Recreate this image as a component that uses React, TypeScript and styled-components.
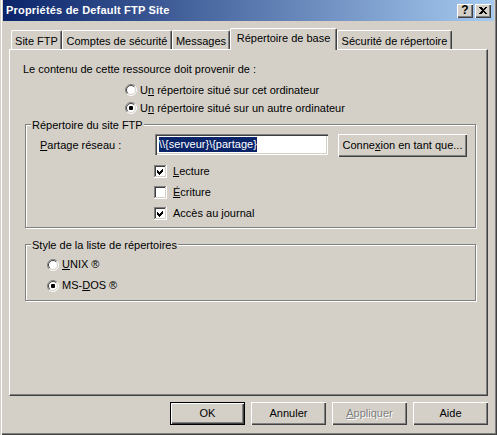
import React from 'react'
import styled, { createGlobalStyle } from 'styled-components'

const face = '#d4d0c8'
const shadow = '#808080'
const darkShadow = '#404040'

const GlobalStyle = createGlobalStyle`
  html, body {
    margin: 0;
    padding: 0;
    background: ${face};
  }
  body {
    font-family: 'Liberation Sans', Arial, sans-serif;
    font-size: 11px;
    line-height: 13px;
    color: #000;
  }
`

const raised = `inset 1px 1px #fff, inset -1px -1px ${darkShadow}, inset -2px -2px ${shadow}`

const Window = styled.div`
  width: 497px;
  height: 435px;
  box-sizing: border-box;
  display: flex;
  flex-direction: column;
  padding: 0 3px 3px 3px;
  background: ${face};
  box-shadow: inset 1px 0 ${face}, inset 2px 0 #fff, inset -1px -1px ${darkShadow}, inset -2px -2px ${shadow};
`

const TitleBar = styled.div`
  height: 21px;
  flex: none;
  display: flex;
  align-items: center;
  gap: 2px;
  padding: 0 3px;
  background: linear-gradient(to right, #0a246a, #a6caf0);
  color: #fff;
  font-weight: bold;
`

const TitleText = styled.div`
  flex: 1;
  white-space: nowrap;
  letter-spacing: 0.2px;
`

const CaptionButton = styled.div`
  width: 16px;
  height: 14px;
  box-sizing: border-box;
  display: flex;
  align-items: center;
  justify-content: center;
  background: ${face};
  color: #000;
  font-weight: bold;
  font-size: 12px;
  box-shadow: ${raised};
`

const Body = styled.div`
  flex: 1;
  display: flex;
  flex-direction: column;
  padding: 7px 6px 0 6px;
`

const TabStrip = styled.div`
  height: 21px;
  display: flex;
  align-items: flex-end;
  padding-left: 2px;
`

const Tab = styled.div<{ $width: number; $active?: boolean }>`
  width: ${(p) => p.$width}px;
  height: ${(p) => (p.$active ? 22 : 19)}px;
  margin-bottom: ${(p) => (p.$active ? -1 : 0)}px;
  padding-top: ${(p) => (p.$active ? 3 : 4)}px;
  box-sizing: border-box;
  text-align: center;
  white-space: nowrap;
  background: ${face};
  border-top: 1px solid #fff;
  border-left: 1px solid #fff;
  border-right: 1px solid ${darkShadow};
  border-top-left-radius: 2px;
  border-top-right-radius: 2px;
  box-shadow: inset -1px 0 ${shadow};
  position: relative;
  z-index: ${(p) => (p.$active ? 1 : 0)};
`

const Panel = styled.div`
  height: 347px;
  box-sizing: border-box;
  display: flex;
  flex-direction: column;
  padding: 13px 11px 0 15px;
  border-top: 1px solid #fff;
  border-left: 1px solid #fff;
  border-right: 1px solid ${darkShadow};
  border-bottom: 1px solid ${darkShadow};
  box-shadow: inset -1px -1px ${shadow};
`

const Intro = styled.div`
  margin-left: -2px;
  height: 14px;
`

const OptionList = styled.div<{ $indent: number; $rowHeight: number; $top?: number }>`
  display: flex;
  flex-direction: column;
  margin-top: ${(p) => p.$top ?? 0}px;
  padding-left: ${(p) => p.$indent}px;
  & > * {
    height: ${(p) => p.$rowHeight}px;
  }
`

const Option = styled.label<{ $gap: number }>`
  display: flex;
  align-items: center;
  gap: ${(p) => p.$gap}px;
  white-space: nowrap;
`

const GroupBox = styled.div<{ $height: number; $top: number }>`
  height: ${(p) => p.$height}px;
  margin-top: ${(p) => p.$top}px;
  box-sizing: border-box;
  display: flex;
  flex-direction: column;
  border: 1px solid ${shadow};
  box-shadow: inset 1px 1px #fff, 1px 1px #fff;
`

const GroupLegend = styled.div`
  align-self: flex-start;
  margin: -6px 0 2px 5px;
  padding: 0 1px;
  background: ${face};
  white-space: nowrap;
`

const ShareRow = styled.div`
  display: flex;
  align-items: flex-start;
  gap: 10px;
  padding-left: 14px;
  margin-bottom: 3px;
`

const FieldLabel = styled.div`
  width: 105px;
  line-height: 20px;
  margin-top: 1px;
`

const TextBox = styled.div`
  width: 173px;
  height: 21px;
  box-sizing: border-box;
  display: flex;
  align-items: center;
  padding: 0 2px 0 4px;
  background: #fff;
  box-shadow: inset 1px 1px ${shadow}, inset 2px 2px ${darkShadow}, inset -1px -1px #fff, inset -2px -2px ${face};
  white-space: nowrap;
  overflow: hidden;
`

const Selection = styled.span`
  background: #0a246a;
  color: #fff;
  padding: 1px 0;
`

const Button = styled.div<{ $width: number; $default?: boolean; $disabled?: boolean }>`
  width: ${(p) => p.$width}px;
  height: 23px;
  box-sizing: border-box;
  display: flex;
  align-items: center;
  justify-content: center;
  white-space: nowrap;
  background: ${face};
  border: ${(p) => (p.$default ? '1px solid #000' : 'none')};
  box-shadow: ${raised};
  color: ${(p) => (p.$disabled ? shadow : '#000')};
  text-shadow: ${(p) => (p.$disabled ? '1px 1px #fff' : 'none')};
`

const ButtonRow = styled.div`
  display: flex;
  justify-content: flex-end;
  gap: 6px;
  margin-top: 6px;
`

const Mn = styled.span`
  text-decoration: underline;
  text-underline-offset: 1px;
`

const Glyph = styled.svg`
  flex: none;
`

function Radio({ checked }: { checked?: boolean }) {
  return (
    <Glyph width="12" height="12" viewBox="0 0 12 12">
      <circle cx="6" cy="6" r="5" fill="#fff" />
      <path d="M2.1 9.9 A5.5 5.5 0 0 1 9.9 2.1" fill="none" stroke={shadow} strokeWidth="1" />
      <path d="M9.9 2.1 A5.5 5.5 0 0 1 2.1 9.9" fill="none" stroke="#fff" strokeWidth="1" />
      <path d="M2.8 9.2 A4.5 4.5 0 0 1 9.2 2.8" fill="none" stroke={darkShadow} strokeWidth="1" />
      <path d="M9.2 2.8 A4.5 4.5 0 0 1 2.8 9.2" fill="none" stroke={face} strokeWidth="1" />
      {checked && <rect x="4" y="4" width="4" height="4" rx="1" fill="#000" />}
    </Glyph>
  )
}

function CheckBox({ checked }: { checked?: boolean }) {
  return (
    <Glyph width="13" height="13" viewBox="0 0 13 13" shapeRendering="crispEdges">
      <rect x="0" y="0" width="13" height="13" fill="#fff" />
      <rect x="0" y="0" width="12" height="1" fill={shadow} />
      <rect x="0" y="0" width="1" height="12" fill={shadow} />
      <rect x="1" y="1" width="10" height="1" fill={darkShadow} />
      <rect x="1" y="1" width="1" height="10" fill={darkShadow} />
      <rect x="1" y="11" width="11" height="1" fill={face} />
      <rect x="11" y="1" width="1" height="11" fill={face} />
      {checked && <path d="M3 5 L5 7 L9 3 L9 6 L5 10 L3 8 Z" fill="#000" />}
    </Glyph>
  )
}

function CloseGlyph() {
  return (
    <Glyph width="8" height="7" viewBox="0 0 8 7" shapeRendering="crispEdges">
      <path d="M0 0 H2 L4 2 L6 0 H8 L5 3.5 L8 7 H6 L4 5 L2 7 H0 L3 3.5 Z" fill="#000" />
    </Glyph>
  )
}

const tabs = [
  { label: 'Site FTP', width: 51 },
  { label: 'Comptes de sécurité', width: 110 },
  { label: 'Messages', width: 58 },
  { label: 'Répertoire de base', width: 107, active: true },
  { label: 'Sécurité de répertoire', width: 115 },
]

export default function App() {
  return (
    <>
      <GlobalStyle />
      <Window>
        <TitleBar>
          <TitleText>Propriétés de Default FTP Site</TitleText>
          <CaptionButton>?</CaptionButton>
          <CaptionButton>
            <CloseGlyph />
          </CaptionButton>
        </TitleBar>
        <Body>
          <TabStrip>
            {tabs.map((t) => (
              <Tab key={t.label} $width={t.width} $active={t.active}>
                {t.label}
              </Tab>
            ))}
          </TabStrip>
          <Panel>
            <Intro>Le contenu de cette ressource doit provenir de :</Intro>
            <OptionList $indent={100} $rowHeight={18} $top={4}>
              <Option $gap={3}>
                <Radio />
                <span>
                  U<Mn>n</Mn> répertoire situé sur cet ordinateur
                </span>
              </Option>
              <Option $gap={3}>
                <Radio checked />
                <span>
                  U<Mn>n</Mn> répertoire situé sur un autre ordinateur
                </span>
              </Option>
            </OptionList>

            <GroupBox $height={104} $top={7}>
              <GroupLegend>Répertoire du site FTP</GroupLegend>
              <ShareRow>
                <FieldLabel>
                  <Mn>P</Mn>artage réseau :
                </FieldLabel>
                <TextBox>
                  <Selection>{'\\\\{serveur}\\{partage}'}</Selection>
                </TextBox>
                <Button $width={129}>
                  Conne<Mn>x</Mn>ion en tant que...
                </Button>
              </ShareRow>
              <OptionList $indent={128} $rowHeight={21} $top={1}>
                <Option $gap={6}>
                  <CheckBox checked />
                  <span>
                    <Mn>L</Mn>ecture
                  </span>
                </Option>
                <Option $gap={6}>
                  <CheckBox />
                  <span>
                    <Mn>É</Mn>criture
                  </span>
                </Option>
                <Option $gap={6}>
                  <CheckBox checked />
                  <span>Accès au journal</span>
                </Option>
              </OptionList>
            </GroupBox>

            <GroupBox $height={57} $top={16}>
              <GroupLegend>Style de la liste de répertoires</GroupLegend>
              <OptionList $indent={21} $rowHeight={21}>
                <Option $gap={3}>
                  <Radio />
                  <span>
                    <Mn>U</Mn>NIX ®
                  </span>
                </Option>
                <Option $gap={3}>
                  <Radio checked />
                  <span>
                    MS-<Mn>D</Mn>OS ®
                  </span>
                </Option>
              </OptionList>
            </GroupBox>
          </Panel>
          <ButtonRow>
            <Button $width={75} $default>
              OK
            </Button>
            <Button $width={75}>Annuler</Button>
            <Button $width={75} $disabled>
              <span>
                <Mn>A</Mn>ppliquer
              </span>
            </Button>
            <Button $width={75}>Aide</Button>
          </ButtonRow>
        </Body>
      </Window>
    </>
  )
}
